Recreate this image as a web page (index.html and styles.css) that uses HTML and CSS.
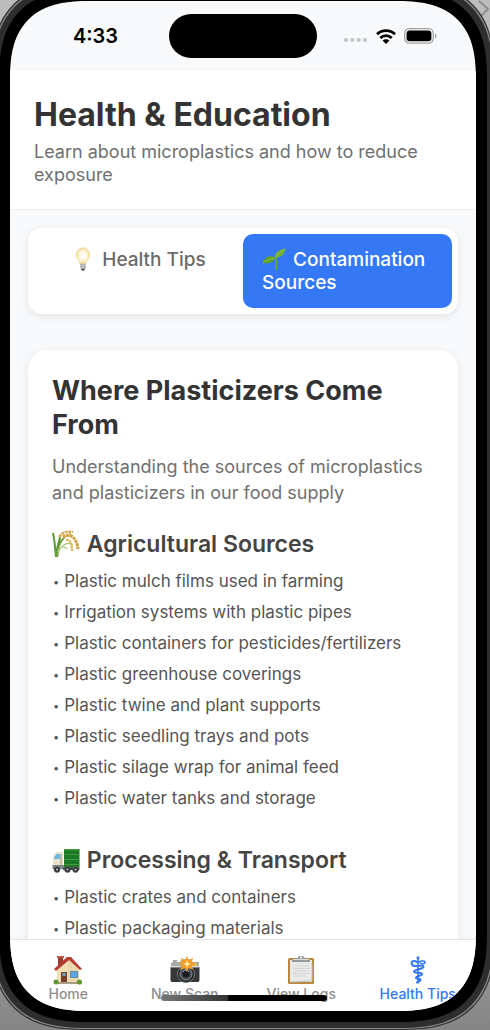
FILE: index.html
```html
<!DOCTYPE html>
<html lang="en">
<head>
<meta charset="utf-8">
<meta name="viewport" content="width=device-width, initial-scale=1">
<title>Health &amp; Education</title>
<link rel="stylesheet" href="styles.css">
</head>
<body>
<svg class="desk-mark" viewBox="0 0 12 20" aria-hidden="true"><path d="M1 1l9 8-8 8" fill="none" stroke="#8d8d8d" stroke-width="2"/></svg>
<div class="device">
  <div class="screen">
    <div class="status">
      <span class="time">4:33</span>
      <span class="island"></span>
      <span class="indicators">
        <svg class="signal" viewBox="0 0 24 6" aria-hidden="true"><g fill="#c6c7ca"><rect width="4" height="4" y="1" rx="1.4"/><rect x="6.3" width="4" height="4" y="1" rx="1.4"/><rect x="12.6" width="4" height="4" y="1" rx="1.4"/><rect x="19" width="4" height="4" y="1" rx="1.4"/></g></svg>
        <svg class="wifi" viewBox="0 0 20 15" aria-hidden="true"><g fill="none" stroke="#000" stroke-width="2.8"><path d="M1 5.3C6 .4 14 .4 19 5.3"/><path d="M4.3 9c3.300-3.200 8.100-3.200 11.400 0"/></g><path d="M6.600 11.500c2-1.700 4.800-1.700 6.800 0L10 14.900z"/></svg>
        <svg class="battery" viewBox="0 0 33 16" aria-hidden="true"><rect x=".7" y=".7" width="28.600" height="14.400" rx="4.600" fill="none" stroke="#a2a3a5" stroke-width="1.300"/><rect x="2.600" y="2.600" width="24.800" height="10.600" rx="3"/><path d="M31 5.500c2 .8 2 4 0 4.800z" fill="#a2a3a5"/></svg>
      </span>
    </div>
    <header class="head">
      <h1>Health &amp; Education</h1>
      <p>Learn about microplastics and how to reduce exposure</p>
    </header>
    <main class="content">
      <div class="segments">
        <button class="segment" type="button"><span><svg class="emoji" viewBox="0 0 24 24" aria-hidden="true"><defs><radialGradient id="glow"><stop offset="0" stop-color="#fff"/><stop offset=".6" stop-color="#fdf8df"/><stop offset="1" stop-color="#eed98c"/></radialGradient></defs><path d="M12 .8a6.800 6.800 0 0 0-6.600 7c0 4.200 3.300 5.600 3.700 9h5.800c.4-3.400 3.700-4.800 3.700-9a6.800 6.800 0 0 0-6.600-7z" fill="url(#glow)" stroke="#efdda0" stroke-width=".8"/><path d="M11.200 16v-4M12.800 16v-4" fill="none" stroke="#ecdca0" stroke-width=".5"/><path d="M9.200 16.800h5.600v4l-1.300 2.400h-3l-1.300-2.400z" fill="#a2a39d"/><path d="M9.300 18.500l5.400-.7M9.500 20.500l5.200-.7" stroke="#ddd" stroke-width=".8"/><path d="M10.300 22h3.400l-1 1.800h-1.400z" fill="#494b4d"/></svg> Health Tips</span></button>
        <button class="segment active" type="button"><span><svg class="emoji" viewBox="0 0 24 24" aria-hidden="true"><path d="M14.200 22.500c.8-5 .5-8.500-.8-12.500" fill="none" stroke="#65a636" stroke-width="1.800" stroke-linecap="round"/><path d="M13.400 11C12 5.500 17 2.500 23.500 1.500 23 8 18 10.500 13.400 11z" fill="#72ad35"/><path d="M13.400 11C10 7 3 9 .5 16c5 1 10 .5 12.900-5z" fill="#5d9e2f"/><path d="M13.600 10.600C16 6.500 19 4 23 2M13 11.200C9 11.500 5 13 1 15.500" fill="none" stroke="#a4cb4c" stroke-width=".7"/></svg> Contamination Sources</span></button>
      </div>
      <article class="card">
        <h2>Where Plasticizers Come From</h2>
        <p>Understanding the sources of microplastics and plasticizers in our food supply</p>
        <section>
          <h3><svg class="emoji" viewBox="0 0 28 28" aria-hidden="true"><g fill="none"><path d="M4 27C3 19 3 12 1 3M5 27C6 18 7 12 12 8M4 27C4 18 7 13 8 7" stroke="#5b9a37" stroke-width="2"/><path d="M5 26C7 17 8 9 19 3M6 26c1-11 9-15 15-11" stroke="#9cae4b" stroke-width="1"/><path d="M7 7c4-5 8-6 14-5" stroke="#d6ac56" stroke-width="2.500" stroke-dasharray="3 .7"/><path d="M11 7c8-5 14 2 15 12" stroke="#d69d3d" stroke-width="3" stroke-dasharray="3 .6"/><path d="M14 10c5-1 6 5 6 11" stroke="#dfb45b" stroke-width="2.500" stroke-dasharray="2.500 .6"/><path d="M6 22c2-5 5-7 9-3" stroke="#b6d18a" stroke-width="1.500"/></g></svg> Agricultural Sources</h3>
          <ul>
            <li>Plastic mulch films used in farming</li>
            <li>Irrigation systems with plastic pipes</li>
            <li>Plastic containers for pesticides/fertilizers</li>
            <li>Plastic greenhouse coverings</li>
            <li>Plastic twine and plant supports</li>
            <li>Plastic seedling trays and pots</li>
            <li>Plastic silage wrap for animal feed</li>
            <li>Plastic water tanks and storage</li>
          </ul>
        </section>
        <section>
          <h3><svg class="emoji" viewBox="0 0 28 28" aria-hidden="true"><path d="M1 11l3-5h7v16H1z" fill="#e8e1cb"/><path d="M2 12l2.500-4H8v5H2z" fill="#69b7da"/><path d="M8 8h2v14H8z" fill="#c2baa2"/><path d="M.5 19H12v4H.5z" fill="#7d8687"/><path d="M12 3h15.500v19H12z" fill="#1b7925"/><path d="M12 3h15.500v1.500H12zM12 8h15.500v1H12zM12 13h15.500v1H12zM12 18h15.500v1H12z" fill="#43983c"/><path d="M11 22h16.500v2H11z" fill="#454746"/><g fill="#303233" stroke="#696b6c" stroke-width=".7"><circle cx="5" cy="23.500" r="3"/><circle cx="15.500" cy="23.500" r="3"/><circle cx="23.500" cy="23.500" r="3"/></g><g fill="#c8caca"><circle cx="5" cy="23.500" r="1"/><circle cx="15.500" cy="23.500" r="1"/><circle cx="23.500" cy="23.500" r="1"/></g></svg> Processing &amp; Transport</h3>
          <ul>
            <li>Plastic crates and containers</li>
            <li>Plastic packaging materials</li>
          </ul>
        </section>
      </article>
    </main>
    <nav class="tabbar">
      <a href="#home"><svg viewBox="0 0 30 30" aria-hidden="true"><path d="M5 2h5v9H5z" fill="#983b31"/><path d="M4 1h7v2H4z" fill="#bb5747"/><path d="M4 13L15 4l11 9v15H4z" fill="#ead9ae"/><path d="M4 13L15 4v24H4z" fill="#f1dfb6"/><path d="M1 14L14 2l4 0 11 12-2 1L16 5 3 16z" fill="#b83c31"/><path d="M8 17h6v11H8z" fill="#74402b"/><path d="M9.500 18h3v3h-3z" fill="#6ba3ca"/><path d="M17 16h8v7h-8z" fill="#6b8b9e"/><path d="M18 17h6v5h-6z" fill="#56a7e8"/><path d="M4 27h22v2H4z" fill="#a89c81"/><circle cx="3" cy="27" r="2.500" fill="#60962e"/><circle cx="26.500" cy="27" r="2.600" fill="#60962e"/></svg><span>Home</span></a>
      <a href="#scan"><svg viewBox="0 0 30 30" aria-hidden="true"><path d="M1 8l2-1V5h4v2h3l2-3h7l2 3h8v20H1z" fill="#a6aaac"/><path d="M.5 12h29v13q0 2-2 2h-25q-2 0-2-2z" fill="#353738"/><path d="M1 11h28v1.500H1z" fill="#d5d6d5"/><path d="M22 8h5v3h-5z" fill="#e3c052"/><circle cx="16" cy="19" r="8.500" fill="#202223" stroke="#777b7e"/><circle cx="16" cy="19" r="6" fill="#454a50" stroke="#8b9298"/><circle cx="16" cy="19" r="3.500" fill="#17191f"/><path d="M13 17q3-4 6 0" stroke="#9eafbd" fill="none"/><path d="M17 1l1.500 4L23 3l-1 4 4 2-4 2 1 4-4.500-2L17 17l-2-4-5 2 2-4.500L8 8l4-1-1-4 4 2z" fill="#f29e24"/><path d="M17 5l1 3 3 1-3 1-1 3-1-3-3-1 3-1z" fill="#fff1ac"/></svg><span>New Scan</span></a>
      <a href="#logs"><svg viewBox="0 0 30 30" aria-hidden="true"><rect x="2" y="3" width="26" height="26" rx="1.500" fill="#b8893f"/><path d="M4 5h22v22H4z" fill="#e9e9e8"/><path d="M5 27l21-1V8" fill="none" stroke="#bfc1c1"/><path d="M7 11h16M7 13.500h17M7 16h16M7 18.500h17M7 21h13" stroke="#d5d6d7" stroke-width="1"/><path d="M6 7V4.500l5-1L13 1h4l2 2.500 5 1V7z" fill="#939b9f"/><path d="M7 4.500h16" stroke="#dae0e2"/><circle cx="15" cy="2.500" r="1" fill="#fff"/></svg><span>View Logs</span></a>
      <a class="current" href="#tips"><svg viewBox="0 0 30 30" aria-hidden="true"><g fill="none" stroke="currentColor" stroke-linecap="round"><path d="M15 3v25" stroke-width="1.600"/><path d="M14.500 7.200C11 4.800 8 6 8.800 9c.5 2 3 2.300 5.200 2 4-.6 6.500-1 6.500.8 0 2.700-9.500 2-9.500 4.700 0 2.300 8 0 8 2.500 0 2.200-6 1.700-6 3.700 0 1.700 4.500.6 4.500 2.300 0 1.300-2.500 1-3.500 2.500" stroke-width="2"/><path d="M15.500 7.200c2-1.400 6.500-1.900 6.500.3 0 1.600-3 1.700-4.500.7" stroke-width="1.600"/></g><circle cx="15" cy="2.800" r="1.500" fill="currentColor"/></svg><span>Health Tips</span></a>
    </nav>
    <span class="home-indicator"></span>
  </div>
</div>
</body>
</html>
```
FILE: styles.css
```css
* { box-sizing: border-box; }
body {
  margin: 0;
  height: 100vh;
  overflow: hidden;
  position: relative;
  background: linear-gradient(#bcbcbc, #b6b6b6 80%, #858585);
  font-family: Inter, "Liberation Sans", sans-serif;
  color: #333;
}
h1, h2, h3, p, ul { margin: 0; padding: 0; }
.desk-mark { position: absolute; top: 0; right: 0; width: 12px; height: 20px; }
.device {
  position: relative;
  height: calc(100vh + 14px);
  margin: -16px -3px 0 -7px;
  padding: 11px;
  border: 6px solid #2e2e2e;
  border-radius: 86px;
  background: #000;
  box-shadow: 0 0 0 1px #888, 0 0 0 2px #333;
}
.screen {
  position: relative;
  display: flex;
  flex-direction: column;
  height: 100%;
  overflow: hidden;
  border-radius: 68px;
  background: #f7f9fb;
}
@supports (corner-shape: superellipse(1.4)) {
  .device { border-radius: 96px; corner-shape: superellipse(1.4); }
  .screen { border-radius: 80px; corner-shape: superellipse(1.4); }
}
.status {
  flex: none;
  display: grid;
  grid-template-columns: 1fr 148px 1fr;
  align-items: center;
  height: 70px;
}
.time {
  padding-left: 12px;
  text-align: center;
  font-size: 20px;
  font-weight: 600;
  color: #000;
}
.island { height: 44px; border-radius: 22px; background: #000; }
.indicators { display: flex; align-items: center; justify-content: center; gap: 8px; padding-right: 12px; }
.signal { width: 24px; height: 6px; margin-top: 8px; }
.wifi { width: 20px; height: 15px; }
.battery { width: 33px; height: 16px; }
.head {
  flex: none;
  padding: 24px 24px 23px;
  border-bottom: 1px solid #ededee;
  background: #fff;
}
h1 { font-size: 32px; line-height: 40px; font-weight: 700; }
.head p { margin-top: 5px; font-size: 18px; line-height: 23px; color: #707070; }
.content { flex: 1; min-height: 0; overflow: hidden; padding: 18px 18px 0; }
.segments {
  display: grid;
  grid-template-columns: 1fr 1fr;
  padding: 6px;
  border-radius: 14px;
  background: #fff;
  box-shadow: 0 2px 8px rgba(0, 0, 0, .09);
}
.segment {
  display: flex;
  justify-content: center;
  align-items: flex-start;
  padding: 14px 19px;
  border: 0;
  border-radius: 10px;
  background: none;
  font: 500 19px/23px Inter, "Liberation Sans", sans-serif;
  color: #6b6b6b;
  text-align: left;
}
.segment.active { background: #3478f6; color: #fff; }
.segment .emoji { width: 24px; height: 24px; margin: -5px 2px -2px 0; vertical-align: middle; }
.card {
  margin-top: 36px;
  padding: 24px;
  border-radius: 19px;
  background: #fff;
  box-shadow: 0 2px 10px rgba(0, 0, 0, .08);
}
h2 { font-size: 27px; line-height: 34px; font-weight: 700; }
.card p { margin-top: 12px; font-size: 18px; line-height: 26px; color: #707070; }
h3 { margin-top: 24px; font-size: 23px; line-height: 28px; font-weight: 600; color: #444; }
h3 .emoji { width: 28px; height: 28px; margin: -5px 1px -2px 0; vertical-align: middle; }
ul { margin-top: 10px; list-style: none; }
li { font-size: 17px; line-height: 26px; margin-bottom: 5px; color: #555; }
li::before { content: "•"; margin: 0 5px 0 1px; font-size: 11px; line-height: 1; vertical-align: 1px; }
section + section { padding-top: 6px; }
.tabbar {
  flex: none;
  display: grid;
  grid-template-columns: repeat(4, 1fr);
  height: 72px;
  padding-top: 15px;
  border-top: 1px solid #e2e3e5;
  background: #fff;
}
.tabbar a {
  display: flex;
  flex-direction: column;
  align-items: center;
  font-size: 14px;
  line-height: 18px;
  font-weight: 500;
  color: #8e8e90;
  text-decoration: none;
  white-space: nowrap;
}
.tabbar a.current { color: #3478f6; }
.tabbar svg { width: 30px; height: 30px; }
.home-indicator {
  position: absolute;
  left: 50%;
  bottom: 10px;
  width: 166px;
  height: 6px;
  margin-left: -82px;
  border-radius: 3px;
  background: linear-gradient(90deg, #777, #333 40%, #000 41%);
}
```
